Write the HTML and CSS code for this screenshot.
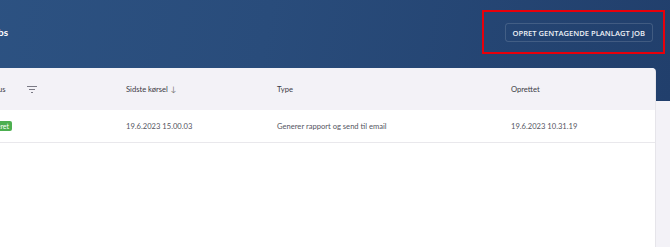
FILE: index.html
```html
<!DOCTYPE html>
<html lang="da">
<head>
    <meta charset="UTF-8">
    <meta name="viewport" content="width=device-width, initial-scale=1.0">
    <title>Planlagte jobs</title>
    <link rel="stylesheet" href="styles.css">
</head>
<body>

<div class="page">
    <!-- Top banner -->
    <div class="hero">
        <h1 class="page-title">Planlagte jobs</h1>
        <button class="hero-btn">OPRET GENTAGENDE PLANLAGT JOB</button>
        <div class="highlight"></div>
    </div>

    <!-- Jobs table -->
    <div class="card">
        <div class="row head-row">
            <div class="cell status-head">
                <span>Status</span>
                <svg class="filter-icon" width="10" height="7" viewBox="0 0 10 7">
                    <rect x="0" y="0" width="10" height="1" fill="#7a7a85"/>
                    <rect x="2" y="3" width="6" height="1" fill="#7a7a85"/>
                    <rect x="4" y="6" width="2" height="1" fill="#7a7a85"/>
                </svg>
            </div>
            <div class="cell">Sidste kørsel <span class="sort">↓</span></div>
            <div class="cell">Type</div>
            <div class="cell">Oprettet</div>
        </div>
        <div class="row data-row">
            <div class="cell"><span class="badge">Genereret</span></div>
            <div class="cell">19.6.2023 15.00.03</div>
            <div class="cell">Generer rapport og send til email</div>
            <div class="cell">19.6.2023 10.31.19</div>
        </div>
    </div>
</div>

</body>
</html>
```

FILE: styles.css
```css
/* Reset */
* {
    margin: 0;
    padding: 0;
    box-sizing: border-box;
}

body {
    font-family: Lato, 'Open Sans', sans-serif;
    background-color: #f3f2f7;
    color: #3a3a44;
    overflow: hidden;
}

/* Page is scrolled sideways, left part cut off */
.page {
    margin-left: -70px;
    width: 740px;
}

/* Header banner */
.hero {
    position: relative;
    height: 101px;
    display: flex;
    justify-content: space-between;
    align-items: flex-start;
    padding: 23px 17px 0 16px;
    background: linear-gradient(100deg, #2d5383 0%, #294c7b 45%, #213f6c 100%);
}

.page-title {
    font-size: 10px;
    font-weight: 700;
    color: #fff;
    line-height: 19px;
}

.hero-btn {
    height: 19px;
    padding: 0 7px;
    font-family: 'Open Sans', sans-serif;
    font-size: 7.6px;
    font-weight: 600;
    color: #eef1f6;
    background: transparent;
    border: 1px solid rgba(255, 255, 255, 0.14);
    border-radius: 3px;
}

/* Red annotation box */
.highlight {
    position: absolute;
    left: 552px;
    top: 10px;
    width: 183px;
    height: 44px;
    border: 2px solid #e8000b;
}

/* Card */
.card {
    position: relative;
    margin: -33px 15px 0 30px;
    height: 180px;
    background: #fff;
    border-radius: 4px 4px 0 0;
    box-shadow: 1px 0 0 #e6e5ea;
}

.row {
    display: grid;
    grid-template-columns: 151px 151px 234px 1fr;
    align-items: center;
    padding-left: 15px;
    font-size: 7.6px;
}

.head-row {
    height: 42px;
    background: #f3f2f7;
    border-radius: 4px 4px 0 0;
    color: #3b3b45;
}

.data-row {
    height: 33px;
    border-bottom: 1px solid #e9e8ec;
    color: #55555f;
}

.status-head {
    display: flex;
    align-items: center;
    gap: 21px;
    padding-left: 10px;
}

.sort {
    color: #777;
    margin-left: 1px;
}

.badge {
    display: inline-block;
    padding: 0 3px;
    height: 10px;
    line-height: 10px;
    font-size: 7px;
    color: #fff;
    background-color: #4caf50;
    border-radius: 2px;
}
```
